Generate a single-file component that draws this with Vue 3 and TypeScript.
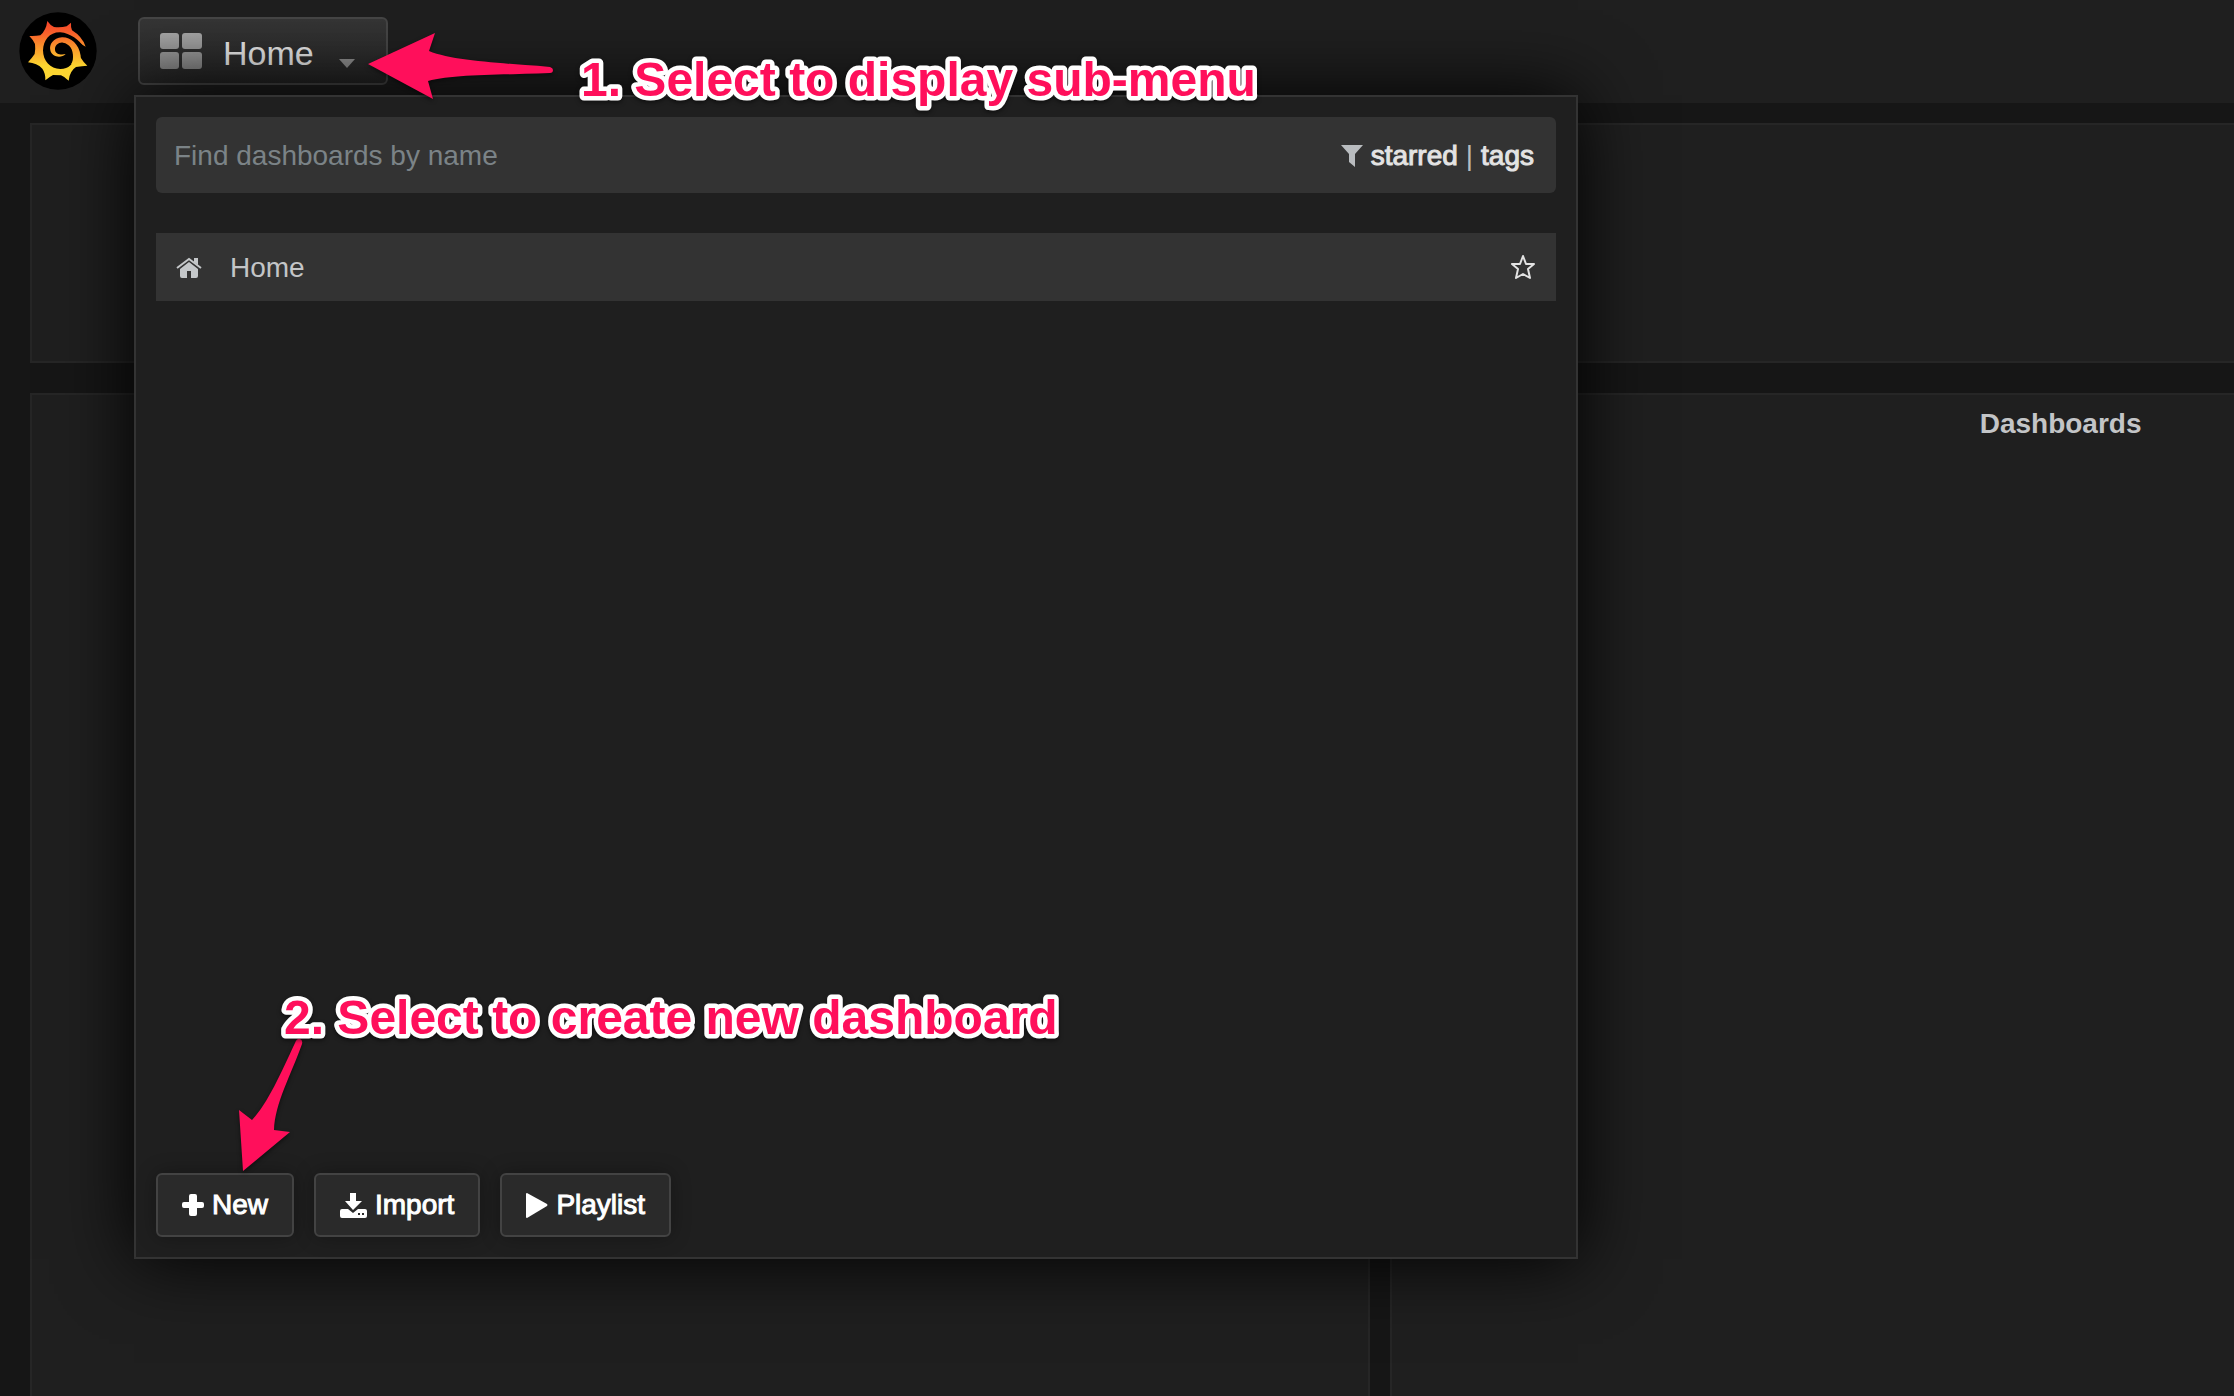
<script setup lang="ts">
import { ref } from 'vue'

interface Dashboard {
  title: string
}

const query = ref('')
const dashboards: Dashboard[] = [{ title: 'Home' }]
</script>

<template>
  <div class="page">
    <header class="navbar">
      <a class="brand" href="#" aria-label="Grafana">
        <svg viewBox="58 37 234 234" aria-hidden="true">
          <defs>
            <linearGradient id="flame" gradientUnits="userSpaceOnUse" x1="0" y1="65" x2="0" y2="242">
              <stop offset="0" stop-color="#f5432a" />
              <stop offset="0.2" stop-color="#f8602b" />
              <stop offset="0.5" stop-color="#fba32c" />
              <stop offset="0.75" stop-color="#fdd630" />
              <stop offset="1" stop-color="#fdd835" />
            </linearGradient>
          </defs>
          <circle cx="175" cy="154" r="116" fill="#000" />
          <path
            fill="url(#flame)"
            d="M143 64Q151 76 163 82Q184 84 201 80L214 69Q213 84 217 92Q247 110 258 141Q250 138 242 130L236 150Q238 175 263 198Q248 199 229 202Q210 214 207 243Q196 232 184 227L160 226Q149 232 137 242Q138 221 128 207Q112 190 85 188Q96 176 105 163Q108 150 106 133Q100 120 89 109Q107 110 122 107Q139 93 143 64Z"
          />
          <path
            fill="#000"
            d="M254 146C238 119 212 101 182 98C150 97 131 122 130 152C130 184 152 208 182 208C208 207 222 194 221 172L242 168L244 140Z"
          />
          <path
            fill="url(#flame)"
            d="M243 168C238 132 212 112 187 113C160 115 148 135 152 152C156 172 184 178 198 163C184 166 167 164 166 150C165 136 178 127 190 129C210 132 221 150 220 172C220 182 218 188 214 194L240 190Z"
          />
        </svg>
      </a>
      <button class="dash-toggle" type="button" aria-expanded="true">
        <svg class="grid-icon" viewBox="0 0 42 36" aria-hidden="true">
          <defs>
            <linearGradient id="tile" gradientUnits="userSpaceOnUse" x1="0" y1="0" x2="0" y2="36">
              <stop offset="0" stop-color="#a4a4a4" />
              <stop offset="1" stop-color="#828282" />
            </linearGradient>
          </defs>
          <g fill="url(#tile)">
            <rect width="19" height="16" rx="3" />
            <rect x="22" width="20" height="16" rx="3" />
            <rect y="19" width="19" height="17" rx="3" />
            <rect x="22" y="19" width="20" height="17" rx="3" />
          </g>
        </svg>
        <span class="dash-title">Home</span>
        <svg class="caret" viewBox="0 0 16 10" aria-hidden="true">
          <path d="M0 0H16L8 9Z" fill="#8b8b8b" />
        </svg>
      </button>

      <section class="menu" aria-label="Dashboard search">
        <div class="search">
          <input v-model="query" type="text" placeholder="Find dashboards by name" aria-label="Find dashboards by name" />
          <div class="filters">
            <svg class="filter-icon" viewBox="0 0 22 22" aria-hidden="true">
              <path d="M0 0H22L14 9V22L8 17V9Z" fill="#b9bcbf" />
            </svg>
            <a href="#">starred</a>
            <span class="divider">|</span>
            <a href="#">tags</a>
          </div>
        </div>
        <ul class="results">
          <li v-for="item in dashboards" :key="item.title">
            <a class="result" href="#">
              <svg class="home-icon" viewBox="0 0 26 21" aria-hidden="true">
                <path d="M13 5L22 12V19Q22 21 20 21H15V14H11V21H6Q4 21 4 19V12Z" fill="#c4c7c9" />
                <path d="M1 11L13 2L25 11" fill="none" stroke="#c4c7c9" stroke-width="2" />
                <path d="M18 1H22V8L18 5Z" fill="#c4c7c9" />
              </svg>
              <span>{{ item.title }}</span>
            </a>
            <button class="star" type="button" aria-label="Star dashboard">
              <svg viewBox="0 0 26 26" aria-hidden="true">
                <path
                  d="M13 2L16 10L24 10L18 15L20 24L13 20L6 24L8 15L2 10L10 10Z"
                  fill="none"
                  stroke="#e3e3e3"
                  stroke-width="2"
                  stroke-linejoin="round"
                />
              </svg>
            </button>
          </li>
        </ul>
        <div class="actions">
          <button type="button">
            <svg width="22" height="22" viewBox="0 0 22 22" aria-hidden="true">
              <path
                d="M9 0H13Q15 0 15 2V8H20Q22 8 22 10V12Q22 14 20 14H15V20Q15 22 13 22H9Q7 22 7 20V14H2Q0 14 0 12V10Q0 8 2 8H7V2Q7 0 9 0Z"
                fill="#fff"
              />
            </svg>
            New
          </button>
          <button type="button">
            <svg width="27" height="25" viewBox="0 0 27 25" aria-hidden="true">
              <path d="M10 0H16V8H22L13 17L5 8H10Z" fill="#fff" />
              <path
                fill-rule="evenodd"
                d="M2 16H8L13 20L18 16H25Q27 16 27 18V23Q27 25 25 25H2Q0 25 0 23V18Q0 16 2 16ZM18 20V22H20V20ZM22 20V22H24V20Z"
                fill="#fff"
              />
            </svg>
            Import
          </button>
          <button type="button">
            <svg width="22" height="25" viewBox="0 0 22 25" aria-hidden="true">
              <path d="M1 0L21 11Q22 12 21 13L1 25Q0 25 0 24V1Q0 0 1 0Z" fill="#fff" />
            </svg>
            Playlist
          </button>
        </div>
        <svg class="arrow arrow-new" viewBox="0 0 70 140" aria-hidden="true">
          <path
            d="M8 134L4 73L17 83C33 66 46 36 60 6Q62 1 65 2Q68 3 67 7C56 38 40 66 39 93L55 95Z"
            fill="#ff0f5b"
          />
        </svg>
        <svg class="note note-new" width="800" height="72">
          <text x="8" y="52">2. Select to create new dashboard</text>
        </svg>
      </section>

      <svg class="arrow arrow-home" viewBox="0 0 190 72" aria-hidden="true">
        <path
          d="M0 34L67 3L61 21C85 31 135 33 182 37Q185 38 185 40Q185 43 182 43C135 45 85 44 60 51L65 69Z"
          fill="#ff0f5b"
        />
      </svg>
      <svg class="note note-home" width="700" height="72">
        <text x="8" y="52">1. Select to display sub-menu</text>
      </svg>
    </header>

    <main class="board">
      <section class="row row-top"><div class="panel wide"></div></section>
      <section class="row row-main">
        <div class="panel half"></div>
        <div class="panel half"><h2>Dashboards</h2></div>
      </section>
    </main>
  </div>
</template>

<style>
body {
  background: #161616;
}
</style>

<style scoped>
.page {
  display: flex;
  flex-direction: column;
  min-height: 100vh;
  overflow: hidden;
  background: #161616;
  color: #c3c5c7;
  font-family: 'Liberation Sans', Arial, sans-serif;
  font-size: 28px;
  line-height: 32px;
}

.page *,
.page {
  box-sizing: border-box;
}

svg {
  display: block;
  flex: none;
}

a {
  color: inherit;
  text-decoration: none;
}

button {
  font: inherit;
  color: inherit;
}

.navbar {
  position: relative;
  z-index: 1;
  display: flex;
  align-items: flex-start;
  gap: 41px;
  height: 103px;
  padding: 12px 19px;
  background: #1f1f1f;
}

.brand svg {
  width: 78px;
  height: 78px;
}

.dash-toggle {
  display: flex;
  align-items: center;
  height: 68px;
  margin-top: 5px;
  padding: 0 31px 0 20px;
  border: 2px solid #454545;
  border-radius: 6px;
  background: linear-gradient(#353535, #242424);
}

.grid-icon {
  width: 42px;
  height: 36px;
}

.dash-title {
  margin: 4px 25px 0 21px;
  font-size: 34px;
  line-height: 40px;
  color: #e3e3e3;
}

.caret {
  width: 16px;
  height: 10px;
  margin-top: 26px;
}

.menu {
  position: absolute;
  top: 95px;
  left: 134px;
  display: flex;
  flex-direction: column;
  width: 1444px;
  max-width: calc(100vw - 154px);
  min-height: 1164px;
  padding: 20px;
  border: 2px solid #333;
  background: #1f1f1f;
  box-shadow: 0 0 70px #000;
}

.search {
  display: flex;
  align-items: center;
  height: 76px;
  padding: 2px 22px 0 18px;
  border-radius: 6px;
  background: #333;
}

.search input {
  flex: 1;
  min-width: 0;
  padding: 0;
  border: 0;
  outline: 0;
  background: none;
  color: #e3e3e3;
  font: inherit;
}

.search input::placeholder {
  color: #7b8387;
  opacity: 1;
}

.filters {
  display: flex;
  align-items: center;
  gap: 8px;
  color: #e3e3e3;
  -webkit-text-stroke: 1px #e3e3e3;
}

.filter-icon {
  width: 22px;
  height: 22px;
}

.divider {
  color: #b9bcbf;
  -webkit-text-stroke: 0;
}

.results {
  margin: 40px 0 0;
  padding: 0;
  list-style: none;
}

.results li {
  display: flex;
  align-items: center;
  justify-content: space-between;
  height: 68px;
  padding: 0 20px;
  background: #333;
}

.result {
  display: flex;
  align-items: center;
  gap: 28px;
}

.result span {
  padding-top: 2px;
}

.home-icon {
  width: 26px;
  height: 21px;
}

.star {
  padding: 0;
  border: 0;
  background: none;
}

.star svg {
  width: 26px;
  height: 26px;
}

.actions {
  display: flex;
  gap: 20px;
  margin-top: auto;
}

.actions button {
  display: flex;
  align-items: center;
  gap: 8px;
  height: 64px;
  padding: 0 24px;
  border: 2px solid #434343;
  border-radius: 6px;
  background: #2a2a2a;
  box-shadow: 0 0 20px rgba(0, 0, 0, 0.3);
  color: #fff;
  -webkit-text-stroke: 1px #fff;
}

.note {
  position: absolute;
  filter: drop-shadow(0 2px 2px rgba(0, 0, 0, 0.5));
}

.note text {
  fill: #ff0f5b;
  font-size: 48px;
  font-weight: 700;
  paint-order: stroke;
  stroke: #fff;
  stroke-width: 9px;
  stroke-linejoin: round;
}

.note-home {
  top: 44px;
  left: 573px;
}

.note-new {
  left: 140px;
  bottom: 203px;
}

.arrow {
  position: absolute;
  filter: drop-shadow(0 2px 2px rgba(0, 0, 0, 0.5));
}

.arrow-home {
  top: 30px;
  left: 368px;
  width: 190px;
}

.arrow-new {
  left: 99px;
  bottom: 80px;
  width: 70px;
}

.board {
  display: flex;
  flex: 1;
  flex-direction: column;
  gap: 30px;
  padding: 20px 0 0 30px;
}

.row {
  display: flex;
  gap: 20px;
}

.row-top {
  height: 240px;
}

.row-main {
  flex: 1;
}

.panel {
  flex: none;
  border: 2px solid #262626;
  background: #1f1f1f;
}

.row-main .panel {
  border-bottom: 0;
}

.wide {
  width: calc(120vw + 20px);
}

.half {
  width: 60vw;
}

h2 {
  margin: 13px 0 0;
  font-size: 28px;
  font-weight: 700;
  line-height: 32px;
  text-align: center;
}
</style>
